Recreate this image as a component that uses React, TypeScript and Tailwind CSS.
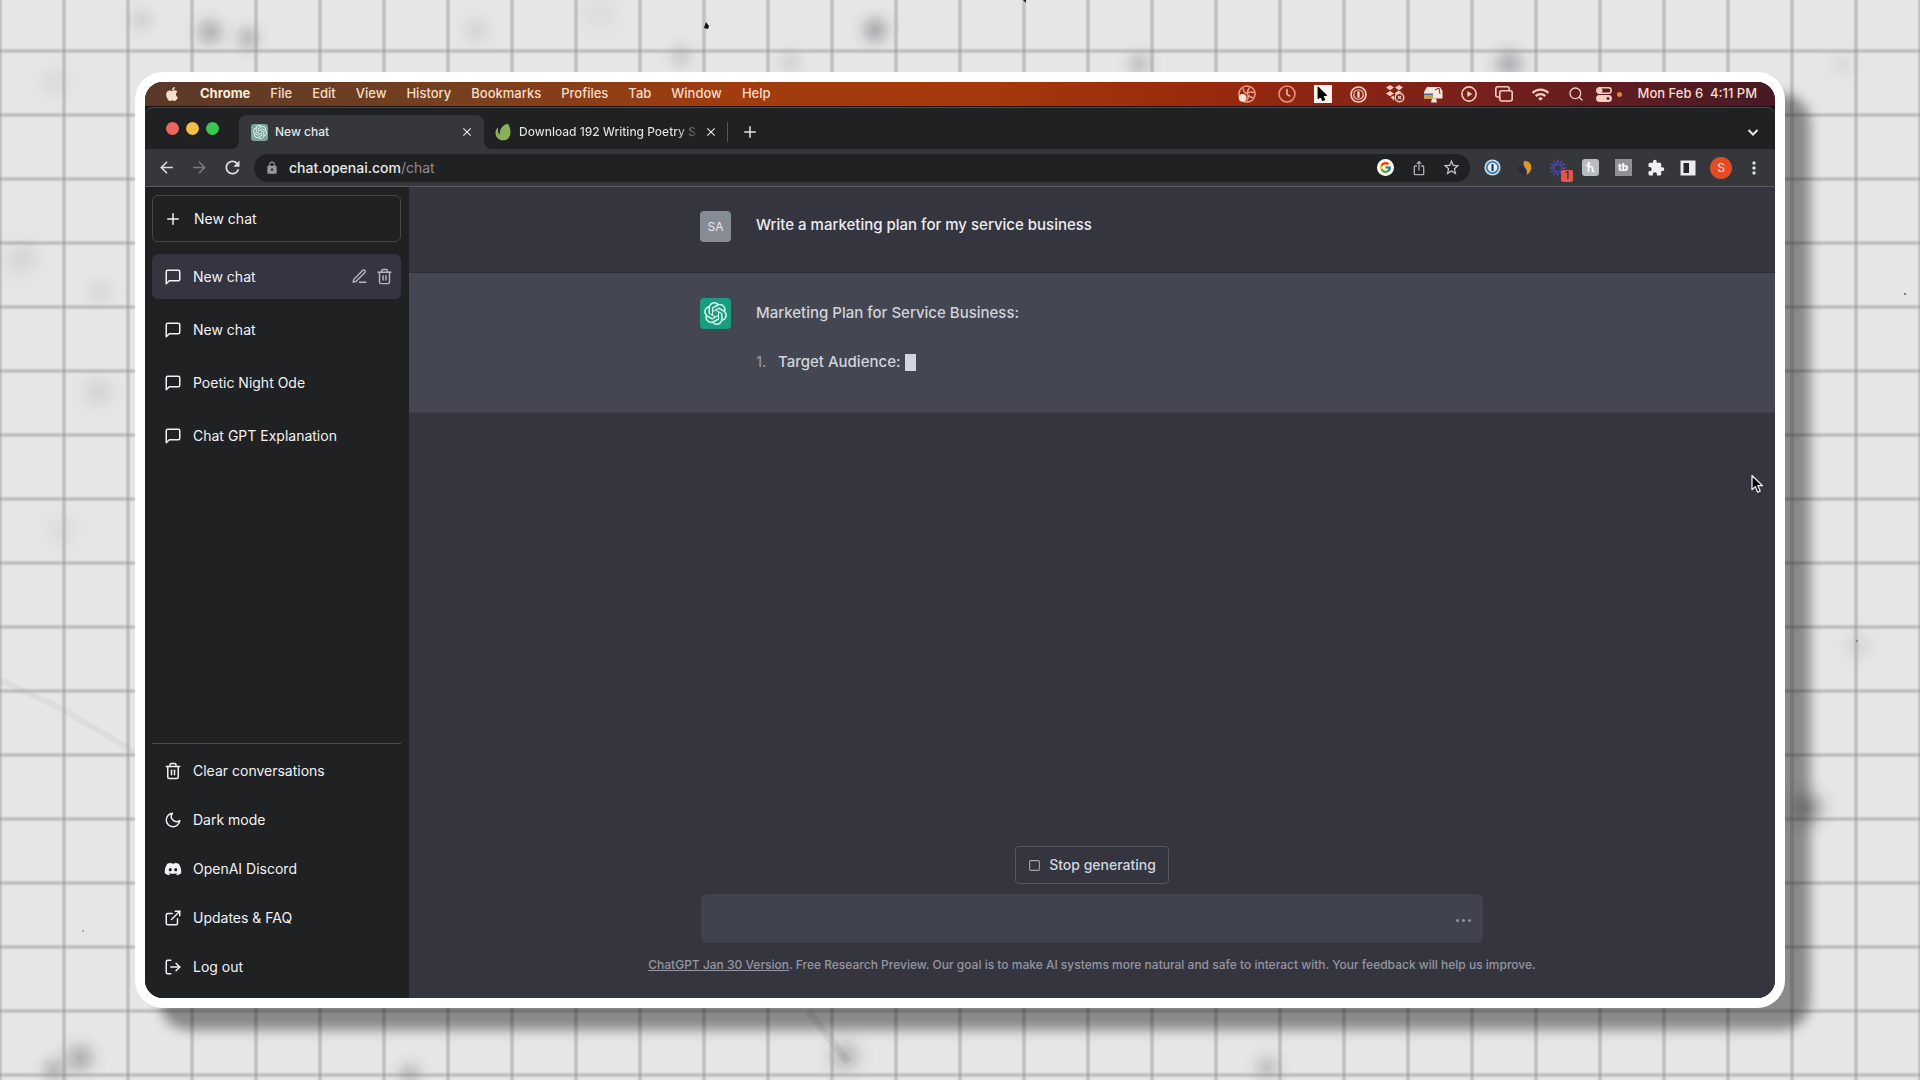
import React from "react";
import {
  FiEdit3,
  FiExternalLink,
  FiLogOut,
  FiMessageSquare,
  FiMoon,
  FiPlus,
  FiSearch,
  FiSquare,
  FiTrash2,
} from "react-icons/fi";
import {
  MdArrowBack,
  MdArrowForward,
  MdClose,
  MdExtension,
  MdIosShare,
  MdLock,
  MdMoreVert,
  MdRefresh,
  MdStarBorder,
  MdWifi,
} from "react-icons/md";
import { FaApple, FaDiscord } from "react-icons/fa";
import { FcGoogle } from "react-icons/fc";
import { SiOpenai } from "react-icons/si";

const smudges = [
  { x: 210, y: 32, r: 26, o: 0.32 },
  { x: 248, y: 38, r: 24, o: 0.26 },
  { x: 142, y: 20, r: 24, o: 0.12 },
  { x: 477, y: 30, r: 28, o: 0.1 },
  { x: 600, y: 14, r: 36, o: 0.06 },
  { x: 681, y: 56, r: 24, o: 0.16 },
  { x: 790, y: 62, r: 24, o: 0.11 },
  { x: 875, y: 30, r: 26, o: 0.36 },
  { x: 1139, y: 64, r: 24, o: 0.22 },
  { x: 1509, y: 64, r: 28, o: 0.34 },
  { x: 54, y: 82, r: 30, o: 0.07 },
  { x: 22, y: 258, r: 34, o: 0.1 },
  { x: 100, y: 292, r: 28, o: 0.08 },
  { x: 98, y: 392, r: 30, o: 0.11 },
  { x: 62, y: 530, r: 32, o: 0.06 },
  { x: 1808, y: 808, r: 32, o: 0.42 },
  { x: 1858, y: 646, r: 28, o: 0.09 },
  { x: 1842, y: 64, r: 26, o: 0.06 },
  { x: 80, y: 1058, r: 28, o: 0.34 },
  { x: 54, y: 1070, r: 24, o: 0.28 },
  { x: 410, y: 1074, r: 24, o: 0.24 },
  { x: 845, y: 1056, r: 30, o: 0.28 },
  { x: 1267, y: 1068, r: 26, o: 0.22 },
];

function PaperBackdrop() {
  return (
    <svg aria-hidden="true" className="absolute inset-0 h-full w-full">
      <defs>
        <linearGradient id="rule-h" x1="0" x2="1" y1="0" y2="0">
          <stop offset="0" stopColor="#8a8a8c" stopOpacity="0" />
          <stop offset="0.5" stopColor="#8a8a8c" stopOpacity="0.5" />
          <stop offset="1" stopColor="#8a8a8c" stopOpacity="0" />
        </linearGradient>
        <linearGradient id="rule-v" x1="0" x2="0" y1="0" y2="1">
          <stop offset="0" stopColor="#8a8a8c" stopOpacity="0" />
          <stop offset="0.5" stopColor="#8a8a8c" stopOpacity="0.5" />
          <stop offset="1" stopColor="#8a8a8c" stopOpacity="0" />
        </linearGradient>
        <radialGradient id="smudge">
          <stop offset="0" stopColor="#4b4b55" stopOpacity="1" />
          <stop offset="0.3" stopColor="#4b4b55" stopOpacity="0.66" />
          <stop offset="0.65" stopColor="#4b4b55" stopOpacity="0.16" />
          <stop offset="1" stopColor="#4b4b55" stopOpacity="0" />
        </radialGradient>
        <pattern id="ruled" width="64" height="64" x="32" y="19" patternUnits="userSpaceOnUse">
          <rect x="29" width="6" height="64" fill="url(#rule-h)" />
          <rect y="29" width="64" height="6" fill="url(#rule-v)" />
        </pattern>
      </defs>
      <path d="M0 680L60 708L135 752" fill="none" stroke="#9a9aa0" strokeOpacity="0.12" strokeWidth="6" />
      <path d="M808 1010L848 1062" fill="none" stroke="#9a9aa0" strokeOpacity="0.2" strokeWidth="8" />
      {smudges.map((s) => (
        <circle key={`${s.x}-${s.y}`} cx={s.x} cy={s.y} r={s.r} fill="url(#smudge)" opacity={s.o} />
      ))}
      <rect width="100%" height="100%" fill="url(#ruled)" />
      <path d="M706 22l3 4-1 3-4-1z" fill="#111" />
      <path d="M1023 0h3v3z" fill="#222" />
      <circle cx="1905" cy="294" r="1" fill="#555" />
      <circle cx="1857" cy="641" r="1" fill="#777" />
      <circle cx="83" cy="931" r="1" fill="#999" />
    </svg>
  );
}

function OnePassword({ size, ring, fill }: { size: number; ring: string; fill: string }) {
  return (
    <svg width={size} height={size} viewBox="0 0 20 20" fill="none">
      <circle cx="10" cy="10" r="8.8" stroke={ring} strokeWidth="2" fill={fill} />
      <circle cx="10" cy="10" r="5.6" stroke={ring} strokeWidth="1.4" />
      <rect x="8.6" y="6.2" width="2.8" height="7.6" rx="1" fill={ring} />
    </svg>
  );
}

function Pointer({ width, height, fill, stroke }: { width: number; height: number; fill: string; stroke: string }) {
  return (
    <svg width={width} height={height} viewBox="0 0 13 20">
      <path
        d="M1 1.5v14.2l3.3-3.1 2.3 5.6 2.6-1.1-2.3-5.4h4.6z"
        fill={fill}
        stroke={stroke}
        strokeWidth="1.3"
        strokeLinejoin="round"
      />
    </svg>
  );
}

function StatusIcons() {
  return (
    <div className="flex items-center gap-[18px] text-[#f6cfc2]">
      <svg width="18" height="18" viewBox="0 0 18 18" fill="none" stroke="#eb9d8a" strokeWidth="1.5" className="mr-1">
        <circle cx="9" cy="9" r="8.1" />
        <path d="M5 3.200c.2 2.800 1.600 4.600 4.200 5.200M9.200 8.400c2-1.800 4.200-2 6.800-.6M9.200 8.400c1.500 2.400 1.400 4.800-.4 7.200M12 2.200c-1.700 1.500-2.600 3.500-2.500 5.600M15.500 12.500c-2 .2-3.800-.6-5-2.200" />
        <circle cx="4.600" cy="12.800" r="3.900" fill="#fbe3d8" stroke="none" />
      </svg>
      <svg width="18" height="18" viewBox="0 0 18 18" fill="none" stroke="#e98f7c" strokeWidth="1.6">
        <circle cx="9" cy="9" r="8" />
        <path d="M9 4v5.400l3.200 1.800" stroke="#f3b5a6" />
      </svg>
      <span className="flex h-[18px] w-[18px] items-center justify-center bg-[#fdf3ee]">
        <Pointer width={11} height={16} fill="#000" stroke="#000" />
      </span>
      <OnePassword size={17} ring="#f6cfc2" fill="none" />
      <svg width="20" height="18" viewBox="0 0 20 18" fill="currentColor">
        <path d="M5 0l4 2.600L5 5.200 1 2.600zM14 0l4 2.600-4 2.600-4-2.600zM5 6l4 2.600-4 2.600-4-2.600zM13.500 5.500l3 1.600-5 3-2-1.500zM5.500 12.300L9 10.400v5z" />
        <circle cx="14.500" cy="12.500" r="4.300" fill="none" stroke="currentColor" strokeWidth="1.500" />
        <path d="M13 14.200l3-3.400M13 12.200l1-1.300M15 14.200l1.200-1.400" stroke="currentColor" strokeWidth="1.200" />
      </svg>
      <svg width="20" height="17" viewBox="0 0 20 17">
        <path d="M4 1h13l2.500 4v7.500H1V6z" fill="#f9e6dc" />
        <path d="M1 7.500h9v2H1z" fill="#4d6688" />
        <path d="M1 9.500h9v3H1z" fill="#c9a04a" />
        <path d="M12 4l4-2 1 6" fill="none" stroke="#6b2a20" strokeWidth="1" />
        <path d="M9 12.500h4l1 4H8z" fill="#f9e6dc" />
      </svg>
      <svg width="16" height="16" viewBox="0 0 16 16" fill="none" stroke="currentColor" strokeWidth="1.600">
        <circle cx="8" cy="8" r="7.100" />
        <path d="M6.300 4.900v6.200L11.300 8z" fill="currentColor" stroke="none" />
      </svg>
      <svg width="18" height="16" viewBox="0 0 18 16" fill="none" stroke="currentColor" strokeWidth="1.600">
        <rect x="4.800" y="4.800" width="12.400" height="10.200" rx="2" />
        <path d="M4 11H2.800a2 2 0 0 1-2-2V2.800a2 2 0 0 1 2-2h9.400a2 2 0 0 1 2 2v1.400" />
      </svg>
      <MdWifi size={19} />
      <div className="flex items-center gap-3">
        <FiSearch size={16} />
        <div className="flex items-center gap-[5px]">
          <svg width="16" height="15" viewBox="0 0 16 15" fill="none" stroke="currentColor" strokeWidth="1.500">
            <rect x="0.800" y="0.800" width="14.400" height="5.400" rx="2.700" />
            <rect x="0.800" y="8.800" width="14.400" height="5.400" rx="2.700" fill="currentColor" />
            <circle cx="4" cy="3.500" r="1.800" fill="currentColor" />
            <circle cx="12" cy="11.500" r="1.500" fill="#6b2022" stroke="none" />
          </svg>
          <span className="h-[5px] w-[5px] rounded-full bg-[#d8893a]" />
        </div>
      </div>
    </div>
  );
}

const menus = ["File", "Edit", "View", "History", "Bookmarks", "Profiles", "Tab", "Window", "Help"];

function MenuBar() {
  return (
    <div className="flex h-6 items-center justify-between bg-[linear-gradient(90deg,#5a3828_0%,#74401f_18%,#a23c0e_36%,#a5380c_52%,#98290d_66%,#7c211a_80%,#5e1c22_91%,#451a26_100%)] pr-[18px] pl-[19px] text-[13px] font-medium text-[#f8dccb]">
      <nav aria-label="Menu bar" className="flex items-center gap-5">
        <button type="button" aria-label="Apple menu">
          <FaApple size={16} className="-mt-px block" />
        </button>
        <button type="button" className="font-bold text-[#fde9dc]">
          Chrome
        </button>
        {menus.map((m) => (
          <button key={m} type="button">
            {m}
          </button>
        ))}
      </nav>
      <div className="flex items-center gap-4">
        <StatusIcons />
        <time className="whitespace-pre">Mon Feb 6  4:11 PM</time>
      </div>
    </div>
  );
}

function TabStrip() {
  return (
    <div className="flex h-[42px] items-center rounded-t-lg bg-[#202122] text-xs font-medium text-[#e4e5e7] shadow-[inset_0_1px_0_#48484a]">
      <div className="flex w-[94px] shrink-0 gap-[7px] pl-[21px]">
        <button type="button" aria-label="Close window" className="h-[13px] w-[13px] rounded-full bg-[#ed6560]" />
        <button type="button" aria-label="Minimize window" className="h-[13px] w-[13px] rounded-full bg-[#f4bd4a]" />
        <button type="button" aria-label="Zoom window" className="h-[13px] w-[13px] rounded-full bg-[#3dc554]" />
      </div>
      <div className="relative flex h-[34px] w-[245px] items-center gap-[7px] self-end rounded-t-lg bg-[#36373a] pr-[10px] pl-3">
        <span className="absolute bottom-0 -left-2 h-2 w-2 bg-[radial-gradient(circle_at_0_0,#202122_8px,#36373a_8px)]" />
        <span className="absolute -right-2 bottom-0 h-2 w-2 bg-[radial-gradient(circle_at_100%_0,#202122_8px,#36373a_8px)]" />
        <span className="flex h-[17px] w-[17px] items-center justify-center rounded-[3px] bg-[#7ba59c] text-[#dff2ec]">
          <SiOpenai size={14} />
        </span>
        <span className="flex-1">New chat</span>
        <button type="button" aria-label="Close tab">
          <MdClose size={14} />
        </button>
      </div>
      <div className="flex h-[34px] w-[243px] items-center gap-[7px] self-end pr-[9px] pl-[10px]">
        <svg width="18" height="18" viewBox="0 0 18 18" className="shrink-0">
          <path
            d="M13.800.8c1 .3 2.600 4.200 2.700 8.200.1 4.600-2.600 8-6.700 8.300C5 17.600 1.500 14.300 1.500 10c0-2 .6-3.600 1.600-4.800.4-.4.9-.2.9.3-.2 2.300.1 4.200 1.100 5.700.2.300.500.200.500-.1C5.800 6 8.500 1.900 13.800.8z"
            fill="#8ab158"
          />
        </svg>
        <span className="flex-1 overflow-hidden bg-[linear-gradient(90deg,#e4e5e7_88%,#202122_102%)] bg-clip-text whitespace-nowrap text-transparent">
          Download 192 Writing Poetry S
        </span>
        <button type="button" aria-label="Close tab">
          <MdClose size={14} />
        </button>
      </div>
      <div className="mt-2 flex flex-1 items-center justify-between pr-[14px]">
        <div className="flex items-center">
          <span className="h-5 w-px bg-[#55565a]" />
          <button type="button" aria-label="New tab" className="ml-[13px]">
            <FiPlus size={18} />
          </button>
        </div>
        <button type="button" aria-label="Search tabs">
          <svg width="16" height="16" viewBox="0 0 16 16" fill="none" stroke="currentColor" strokeWidth="2">
            <path d="M3.500 6l4.500 4.500L12.500 6" />
          </svg>
        </button>
      </div>
    </div>
  );
}

function Slot({ label, children }: { label: string; children: React.ReactNode }) {
  return (
    <button type="button" aria-label={label} className="relative flex flex-1 items-center justify-center">
      {children}
    </button>
  );
}

const rays = Array.from({ length: 12 }, (_, i) => i * 30);

function Toolbar() {
  return (
    <div className="flex h-[38px] items-center border-b border-[#5a5b5e] bg-[#36373a] px-[5px] text-[#dcdde0]">
      <div className="flex w-[99px] shrink-0">
        <Slot label="Back">
          <MdArrowBack size={19} />
        </Slot>
        <Slot label="Forward">
          <MdArrowForward size={19} className="text-[#77787c]" />
        </Slot>
        <Slot label="Reload">
          <MdRefresh size={21} />
        </Slot>
      </div>
      <div className="ml-[5px] flex h-7 flex-1 items-center rounded-full bg-[#202122] pr-[2px] pl-[11px]">
        <MdLock size={14} className="text-[#96979b]" />
        <div className="ml-[10px] flex flex-1 items-center text-sm">
          <input
            type="text"
            aria-label="Address"
            defaultValue="chat.openai.com"
            className="field-sizing-content bg-transparent font-medium text-[#e8e9eb] outline-none"
          />
          <span className="text-[#8d8e92]">/chat</span>
        </div>
        <div className="flex w-[99px]">
          <Slot label="Search with Google">
            <span className="flex h-[17px] w-[17px] items-center justify-center rounded-full bg-white">
              <FcGoogle size={13} />
            </span>
          </Slot>
          <Slot label="Share">
            <MdIosShare size={16} className="text-[#a9aaae]" />
          </Slot>
          <Slot label="Bookmark this tab">
            <MdStarBorder size={19} className="text-[#c3c4c8]" />
          </Slot>
        </div>
      </div>
      <div className="ml-[6px] flex h-[22px] w-[294px] shrink-0">
        <Slot label="1Password">
          <svg width="17" height="17" viewBox="0 0 20 20">
            <circle cx="10" cy="10" r="9.500" fill="#c8dbea" />
            <circle cx="10" cy="10" r="7.600" fill="#3f78b4" />
            <circle cx="10" cy="10" r="5.600" fill="#e4edf5" />
            <rect x="8.800" y="5.800" width="2.400" height="8.400" rx="1" fill="#1c2f4a" />
          </svg>
        </Slot>
        <Slot label="Eye dropper">
          <svg width="18" height="18" viewBox="0 0 18 18">
            <path d="M2.500 7c4-1 5 1.500 6.500 3.500l1 5c-5 1.500-8-2-7.500-8.500z" fill="#2a2a44" />
            <path d="M8 2c5.500-.5 8.500 4 7 8.500-.8 2.600-2.500 4.500-4.500 5.500.8-3 .6-4.500-.8-6.500C8.200 7.500 7 5 8 2z" fill="#dc962c" />
          </svg>
        </Slot>
        <Slot label="Screen recorder">
          <svg width="18" height="18" viewBox="0 0 18 18" stroke="#4f4cc4" strokeWidth="1.300" strokeLinecap="round">
            {rays.map((deg) => (
              <path key={deg} d="M9 5.600V1.200" transform={`rotate(${deg} 9 9)`} />
            ))}
          </svg>
          <span className="absolute right-px -bottom-[3px] flex h-3 w-3 items-center justify-center rounded-[2px] bg-[#e0574a] text-[10px] text-[#3a1512]">
            1
          </span>
        </Slot>
        <Slot label="Honey">
          <svg width="17" height="17" viewBox="0 0 17 17">
            <rect width="17" height="17" rx="3" fill="#bbbcbf" />
            <path d="M6.500 3.500v9M6.500 9c1-2 4-2.200 4 .3v2.200c0 .8.500 1.200 1.500 1M4.500 6.500c1.500 0 2.500-.8 3.300-2.300" fill="none" stroke="#fff" strokeWidth="1.500" strokeLinecap="round" />
          </svg>
        </Slot>
        <Slot label="TubeBuddy">
          <span className="flex h-[17px] w-[17px] items-center justify-center bg-[#909195] text-[10px] font-extrabold text-white">
            tb
          </span>
        </Slot>
        <Slot label="Extensions">
          <MdExtension size={18} className="text-[#eeeff1]" />
        </Slot>
        <Slot label="Side panel">
          <svg width="16" height="16" viewBox="0 0 16 16">
            <rect x="0.500" y="0.500" width="15" height="15" fill="#e9eaec" />
            <rect x="3.500" y="3" width="5.500" height="10" fill="#242528" />
          </svg>
        </Slot>
        <Slot label="Profile">
          <span className="flex h-[22px] w-[22px] items-center justify-center rounded-full bg-[#e24c24] text-xs text-[#fbe6df]">
            S
          </span>
        </Slot>
        <Slot label="Chrome menu">
          <MdMoreVert size={20} />
        </Slot>
      </div>
    </div>
  );
}

const chats = ["New chat", "New chat", "Poetic Night Ode", "Chat GPT Explanation"];

const footerLinks = [
  { label: "Clear conversations", Icon: FiTrash2 },
  { label: "Dark mode", Icon: FiMoon },
  { label: "OpenAI Discord", Icon: FaDiscord },
  { label: "Updates & FAQ", Icon: FiExternalLink },
  { label: "Log out", Icon: FiLogOut },
];

function Sidebar() {
  return (
    <aside className="flex w-[264px] shrink-0 flex-col bg-[#202123] pt-2 pr-2 pb-[7px] pl-[7px] text-sm text-[#f2f2f6]">
      <button
        type="button"
        className="flex h-[47px] items-center gap-3 rounded-md border border-[#46474b] px-[11px]"
      >
        <FiPlus size={18} />
        New chat
      </button>
      <ul className="mt-3 flex flex-1 flex-col gap-2">
        {chats.map((title, i) => (
          <li
            key={i}
            className={
              i === 0
                ? "flex h-[45px] items-center rounded-md bg-[#343540] pr-2 pl-3"
                : "flex h-[45px] items-center rounded-md pr-2 pl-3"
            }
          >
            <a href="#chat" className="flex flex-1 items-center gap-[11px]">
              <FiMessageSquare size={18} />
              {title}
            </a>
            {i === 0 && (
              <div className="flex gap-2 text-[#b5b5c0]">
                <button type="button" aria-label="Rename chat">
                  <FiEdit3 size={17} />
                </button>
                <button type="button" aria-label="Delete chat">
                  <FiTrash2 size={17} />
                </button>
              </div>
            )}
          </li>
        ))}
      </ul>
      <nav aria-label="Account" className="border-t border-[#4a4b4f] pt-[2px]">
        {footerLinks.map(({ label, Icon }) => (
          <a key={label} href="#menu" className="flex h-[49px] items-center gap-[11px] pl-3">
            <Icon size={18} />
            {label}
          </a>
        ))}
      </nav>
    </aside>
  );
}

function Conversation() {
  return (
    <main className="flex flex-1 flex-col bg-[#353540] text-[15px] leading-7 font-medium text-[#ececf1]">
      <section className="border-b border-[#2b2c36] pt-6 pb-[30px]">
        <div className="mx-auto flex max-w-[784px] gap-[25px]">
          <span className="flex h-[31px] w-[31px] shrink-0 items-center justify-center rounded-sm bg-[#868b95] text-xs font-normal text-[#e6e7ec]">
            SA
          </span>
          <p>Write a marketing plan for my service business</p>
        </div>
      </section>
      <section className="border-b border-[#3b3c47] bg-[#444752] pt-[25px] pb-9 text-[#d0d3dc]">
        <div className="mx-auto flex max-w-[784px] gap-[25px]">
          <span className="flex h-[31px] w-[31px] shrink-0 items-center justify-center rounded-sm bg-[#1a9c80] text-[#d5f5ea]">
            <SiOpenai size={23} />
          </span>
          <div className="flex flex-col gap-[21px] pt-px">
            <p>Marketing Plan for Service Business:</p>
            <ol>
              <li className="flex items-center">
                <span className="w-[22px] font-normal text-[#9a9dab]">1.</span>
                Target Audience:
                <span className="ml-1 h-[17px] w-[11px] bg-[#d2d5e4]" />
              </li>
            </ol>
          </div>
        </div>
      </section>
      <form className="mt-auto flex flex-col items-center pb-[25px]">
        <button
          type="button"
          className="flex h-[38px] items-center gap-2 rounded border border-[#565762] px-3 text-sm text-[#d3d4de]"
        >
          <FiSquare size={13} className="text-[#a3a4b0]" />
          Stop generating
        </button>
        <div className="mt-[10px] flex h-[49px] w-full max-w-[782px] items-center rounded-md bg-[#40424e] pr-3">
          <input type="text" aria-label="Message" className="h-full flex-1 bg-transparent px-4 outline-none" />
          <button type="button" aria-label="Generating" className="flex gap-[3px] pt-1">
            <span className="h-[3px] w-[3px] rounded-full bg-[#9092a0]" />
            <span className="h-[3px] w-[3px] rounded-full bg-[#9092a0]" />
            <span className="h-[3px] w-[3px] rounded-full bg-[#9092a0]" />
          </button>
        </div>
        <p className="mt-[14px] text-xs leading-4 text-[#94959f]">
          <a href="#release-notes" className="underline">
            ChatGPT Jan 30 Version
          </a>
          . Free Research Preview. Our goal is to make AI systems more natural and safe to interact with. Your
          feedback will help us improve.
        </p>
      </form>
    </main>
  );
}

export default function App() {
  return (
    <div className="relative flex min-h-screen overflow-hidden bg-[#e6e6e6] px-[135px] py-[72px] font-['Inter',sans-serif]">
      <PaperBackdrop />
      <div className="relative flex flex-1 rounded-[28px] border-[10px] border-white bg-white shadow-[25px_22px_12px_rgba(20,20,20,0.44)]">
        <div className="flex flex-1 flex-col overflow-hidden rounded-[18px] bg-[#201516]">
          <MenuBar />
          <div className="mt-px flex flex-1 flex-col">
            <TabStrip />
            <Toolbar />
            <div className="flex flex-1">
              <Sidebar />
              <Conversation />
            </div>
          </div>
        </div>
        <span className="absolute top-[392px] right-[11px]">
          <Pointer width={13} height={20} fill="#000" stroke="#e8e8ee" />
        </span>
      </div>
    </div>
  );
}
